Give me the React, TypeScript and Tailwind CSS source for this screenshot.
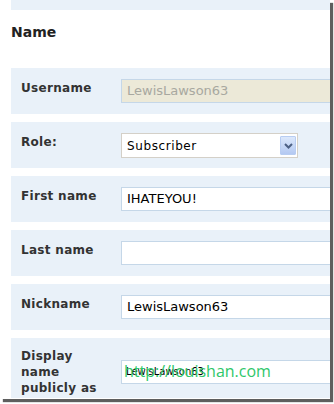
const rowBg = 'bg-[#e9f1f9]';

function Label({ children }: { children: React.ReactNode }) {
  return (
    <div className="w-[110px] shrink-0 pl-[10px] pt-[12px] text-[12px] font-bold leading-[16px] tracking-[0.3px] text-[#333]">
      {children}
    </div>
  );
}

function TextInput({ value, disabled }: { value?: string; disabled?: boolean }) {
  return (
    <div
      className={`mt-[11px] h-[24px] w-[230px] shrink-0 border border-[#c5d7e8] px-[5px] text-[13px] leading-[22px] ${
        disabled ? 'bg-[#ece9d8] text-[#a8a8a0]' : 'bg-white text-black'
      }`}
    >
      {value}
    </div>
  );
}

function Row({ children, tall }: { children: React.ReactNode; tall?: boolean }) {
  return (
    <div className={`flex ${tall ? 'h-[60px]' : 'h-[46px]'} ${rowBg}`}>{children}</div>
  );
}

export default function App() {
  return (
    <div className="h-[404px] w-[334px] bg-white" style={{ fontFamily: '"DejaVu Sans", Verdana, sans-serif' }}>
      <div className="h-[399px] w-[330px] overflow-hidden bg-white shadow-[3px_3px_1px_rgba(40,40,40,0.75)]">
        <div className="pl-[11px]">
          <div className={`h-[10px] ${rowBg}`} />
          <h2 className="mt-[14px] h-[44px] text-[14px] font-bold leading-[16px] text-[#222]">Name</h2>

          <div className="flex flex-col gap-[8px]">
            <Row>
              <Label>Username</Label>
              <TextInput value="LewisLawson63" disabled />
            </Row>

            <Row>
              <Label>Role:</Label>
              <div className="mt-[11px] flex h-[25px] w-[177px] shrink-0 items-center justify-between border border-[#d4d0c8] bg-white pl-[5px] pr-[1px] text-[12px] tracking-[0.6px] text-black">
                <span>Subscriber</span>
                <span className="flex h-[19px] w-[16px] items-center justify-center rounded-[1px] border border-[#b8cdf2] bg-gradient-to-b from-[#dce8fb] to-[#b4c9f2]">
                  <svg width="9" height="6" viewBox="0 0 9 6">
                    <path d="M1 1 L4.5 4.5 L8 1" fill="none" stroke="#4d6185" strokeWidth="2" />
                  </svg>
                </span>
              </div>
            </Row>

            <Row>
              <Label>First name</Label>
              <TextInput value="IHATEYOU!" />
            </Row>

            <Row>
              <Label>Last name</Label>
              <TextInput value="" />
            </Row>

            <Row>
              <Label>Nickname</Label>
              <TextInput value="LewisLawson63" />
            </Row>

            <Row tall>
              <div className="w-[110px] shrink-0 pl-[10px] pt-[10px] text-[12px] font-bold leading-[16px] tracking-[0.3px] text-[#333]">
                Display
                <br />
                name
                <br />
                publicly as
              </div>
              <div className="relative mt-[22px] h-[24px] w-[230px] shrink-0 border border-[#c5d7e8] bg-white px-[4px] text-[10px] leading-[22px] text-black">
                LewisLawson63
                <span className="absolute left-[2px] top-[-2px] text-[16px] leading-[24px] text-[#2fc76a]" style={{ fontFamily: '"Open Sans", sans-serif' }}>
                  http://louishan.com
                </span>
              </div>
            </Row>
          </div>
        </div>
      </div>
    </div>
  );
}
